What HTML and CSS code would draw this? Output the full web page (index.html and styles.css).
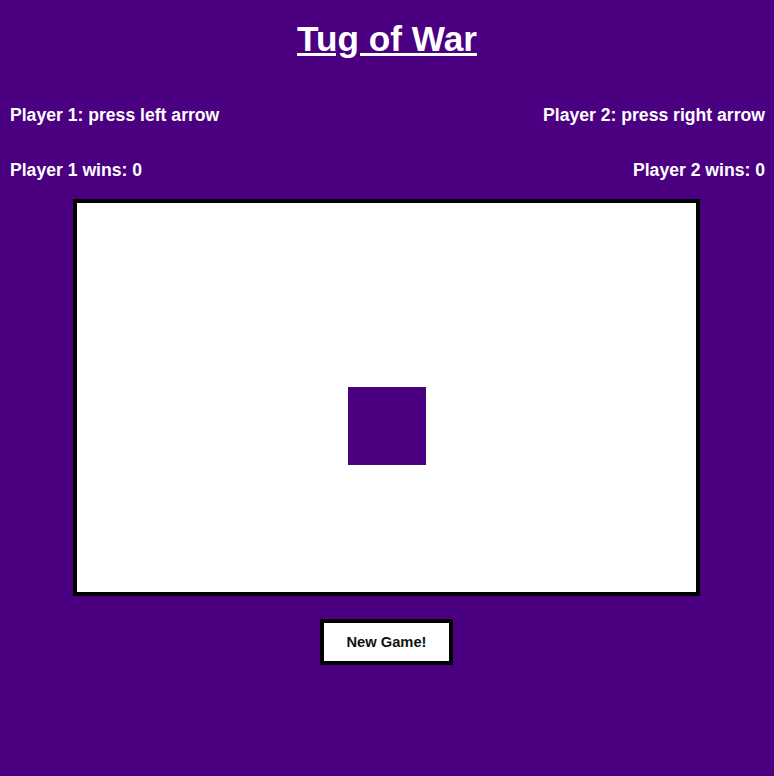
FILE: index.html
```html
<!DOCTYPE html>
<html>
<head>
<meta charset="utf-8">
<title>Tug of War</title>
<link rel="stylesheet" href="styles.css">
</head>
<body>
  <h1 class="title">Tug of War</h1>
  <div class="row row-keys">
    <p class="label">Player 1: press left arrow</p>
    <p class="label">Player 2: press right arrow</p>
  </div>
  <div class="row row-wins">
    <p class="label">Player 1 wins: 0</p>
    <p class="label">Player 2 wins: 0</p>
  </div>
  <div class="field">
    <div class="rope-marker"></div>
  </div>
  <div class="actions">
    <button class="new-game">New Game!</button>
  </div>
</body>
</html>
```
FILE: styles.css
```css
html, body {
  margin: 0;
  padding: 0;
}
body {
  background: #4b0082;
  color: #ffffff;
  font-family: "Liberation Sans", Arial, sans-serif;
  width: 774px;
  height: 776px;
  overflow: hidden;
}
.title {
  margin: 19px 0 0;
  font-size: 35.2px;
  line-height: 40px;
  font-weight: bold;
  text-align: center;
  text-decoration: underline;
}
.row {
  display: flex;
  justify-content: space-between;
  padding: 0 9px 0 10px;
}
.row-keys {
  margin-top: 46px;
}
.row-wins {
  margin-top: 35px;
}
.label {
  margin: 0;
  font-size: 17.6px;
  line-height: 20px;
  font-weight: bold;
}
.field {
  position: relative;
  box-sizing: content-box;
  width: 619px;
  height: 389px;
  margin: 19px 0 0 73px;
  border: 4px solid #000000;
  background: #ffffff;
}
.rope-marker {
  position: absolute;
  left: 271px;
  top: 184px;
  width: 78px;
  height: 78px;
  background: #4b0082;
}
.actions {
  display: flex;
  justify-content: flex-start;
  padding-left: 320px;
  margin-top: 23px;
}
.new-game {
  box-sizing: border-box;
  width: 133px;
  height: 46px;
  border: 4px solid #000000;
  background: #ffffff;
  color: #111111;
  font-family: "Liberation Sans", Arial, sans-serif;
  font-size: 14.7px;
  font-weight: bold;
  padding: 0;
  cursor: pointer;
}
```
